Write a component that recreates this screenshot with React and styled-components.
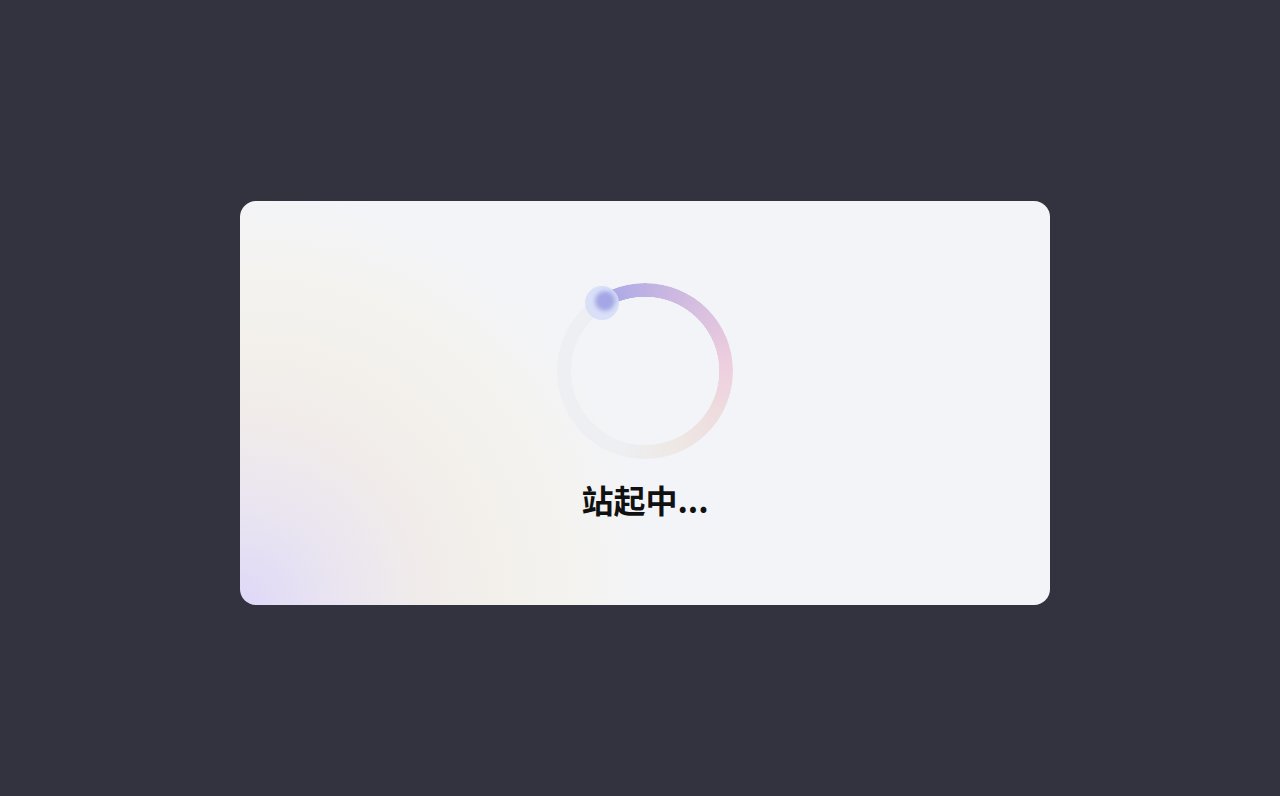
import React from "react";
import styled, { createGlobalStyle } from "styled-components";

const Global = createGlobalStyle`
  html, body {
    margin: 0;
    padding: 0;
    background: #33333f;
  }
  body {
    font-family: "Noto Sans CJK SC", "Noto Sans", sans-serif;
  }
`;

const Page = styled.div`
  display: flex;
  align-items: center;
  justify-content: center;
  box-sizing: border-box;
  min-height: 796px;
  padding: 10px 0 0 10px;
  background: #33333f;
`;

const Card = styled.div`
  position: relative;
  overflow: hidden;
  display: flex;
  flex-direction: column;
  align-items: center;
  justify-content: center;
  gap: 21px;
  box-sizing: border-box;
  width: 810px;
  height: 404px;
  padding-bottom: 6px;
  border-radius: 16px;
  background:
    radial-gradient(circle at 0% 100%,
      rgba(222, 216, 248, 1) 0px,
      rgba(232, 226, 240, 0.9) 90px,
      rgba(240, 234, 232, 0.85) 180px,
      rgba(243, 239, 232, 0.8) 260px,
      rgba(244, 242, 234, 0.6) 330px,
      rgba(243, 244, 248, 0) 420px),
    #f3f4f8;
`;

/* faint rotated user/time watermark laid over the card */
const Watermark = styled.div`
  position: absolute;
  left: ${({ $x }) => $x}px;
  top: ${({ $y }) => $y - 72}px;
  transform: rotate(-31deg);
  transform-origin: left bottom;
  color: rgba(0, 0, 0, 0.022);
  font-family: "Noto Sans", "Noto Sans CJK SC", sans-serif;
  font-size: 30px;
  line-height: 36px;
  white-space: nowrap;
  pointer-events: none;
  span {
    display: block;
  }
`;

const Spinner = styled.div`
  position: relative;
  z-index: 1;
  width: 176px;
  height: 176px;
  flex-shrink: 0;
`;

const Track = styled.div`
  position: absolute;
  inset: 0;
  border-radius: 50%;
  box-sizing: border-box;
  border: 14px solid #eeeff2;
`;

const Arc = styled.div`
  position: absolute;
  inset: 0;
  border-radius: 50%;
  background: conic-gradient(
    from -30deg,
    rgba(168, 168, 232, 1) 0deg,
    rgba(204, 184, 224, 1) 50deg,
    rgba(236, 204, 222, 1) 110deg,
    rgba(238, 218, 220, 0.9) 150deg,
    rgba(238, 228, 220, 0.6) 190deg,
    rgba(238, 232, 226, 0) 225deg,
    rgba(238, 232, 226, 0) 360deg
  );
  -webkit-mask: radial-gradient(circle, transparent 74px, #000 74.5px);
  mask: radial-gradient(circle, transparent 74px, #000 74.5px);
`;

const Halo = styled.div`
  position: absolute;
  left: 28px;
  top: 3px;
  width: 34px;
  height: 34px;
  border-radius: 50%;
  background: rgba(214, 222, 246, 0.9);
`;

const Dot = styled.div`
  position: absolute;
  left: 38px;
  top: 8px;
  width: 20px;
  height: 20px;
  border-radius: 50%;
  background: #a4a6e6;
  filter: blur(2px);
`;

const Label = styled.div`
  position: relative;
  z-index: 1;
  font-family: "Noto Sans CJK SC", "Noto Sans", sans-serif;
  font-size: 32px;
  font-weight: 700;
  line-height: 38px;
  color: #111;
`;

const marks = [
  { x: 400, y: 62 },
  { x: 40, y: 262 },
  { x: 520, y: 262 },
  { x: 159, y: 467 },
  { x: 725, y: 405 },
];

export default function App() {
  return (
    <>
      <Global />
      <Page>
        <Card>
          {marks.map((m, i) => (
            <Watermark key={i} $x={m.x} $y={m.y}>
              <span>余文</span>
              <span>2026/04/06 15:53</span>
            </Watermark>
          ))}
          <Spinner>
            <Track />
            <Arc />
            <Halo />
            <Dot />
          </Spinner>
          <Label>站起中...</Label>
        </Card>
      </Page>
    </>
  );
}
